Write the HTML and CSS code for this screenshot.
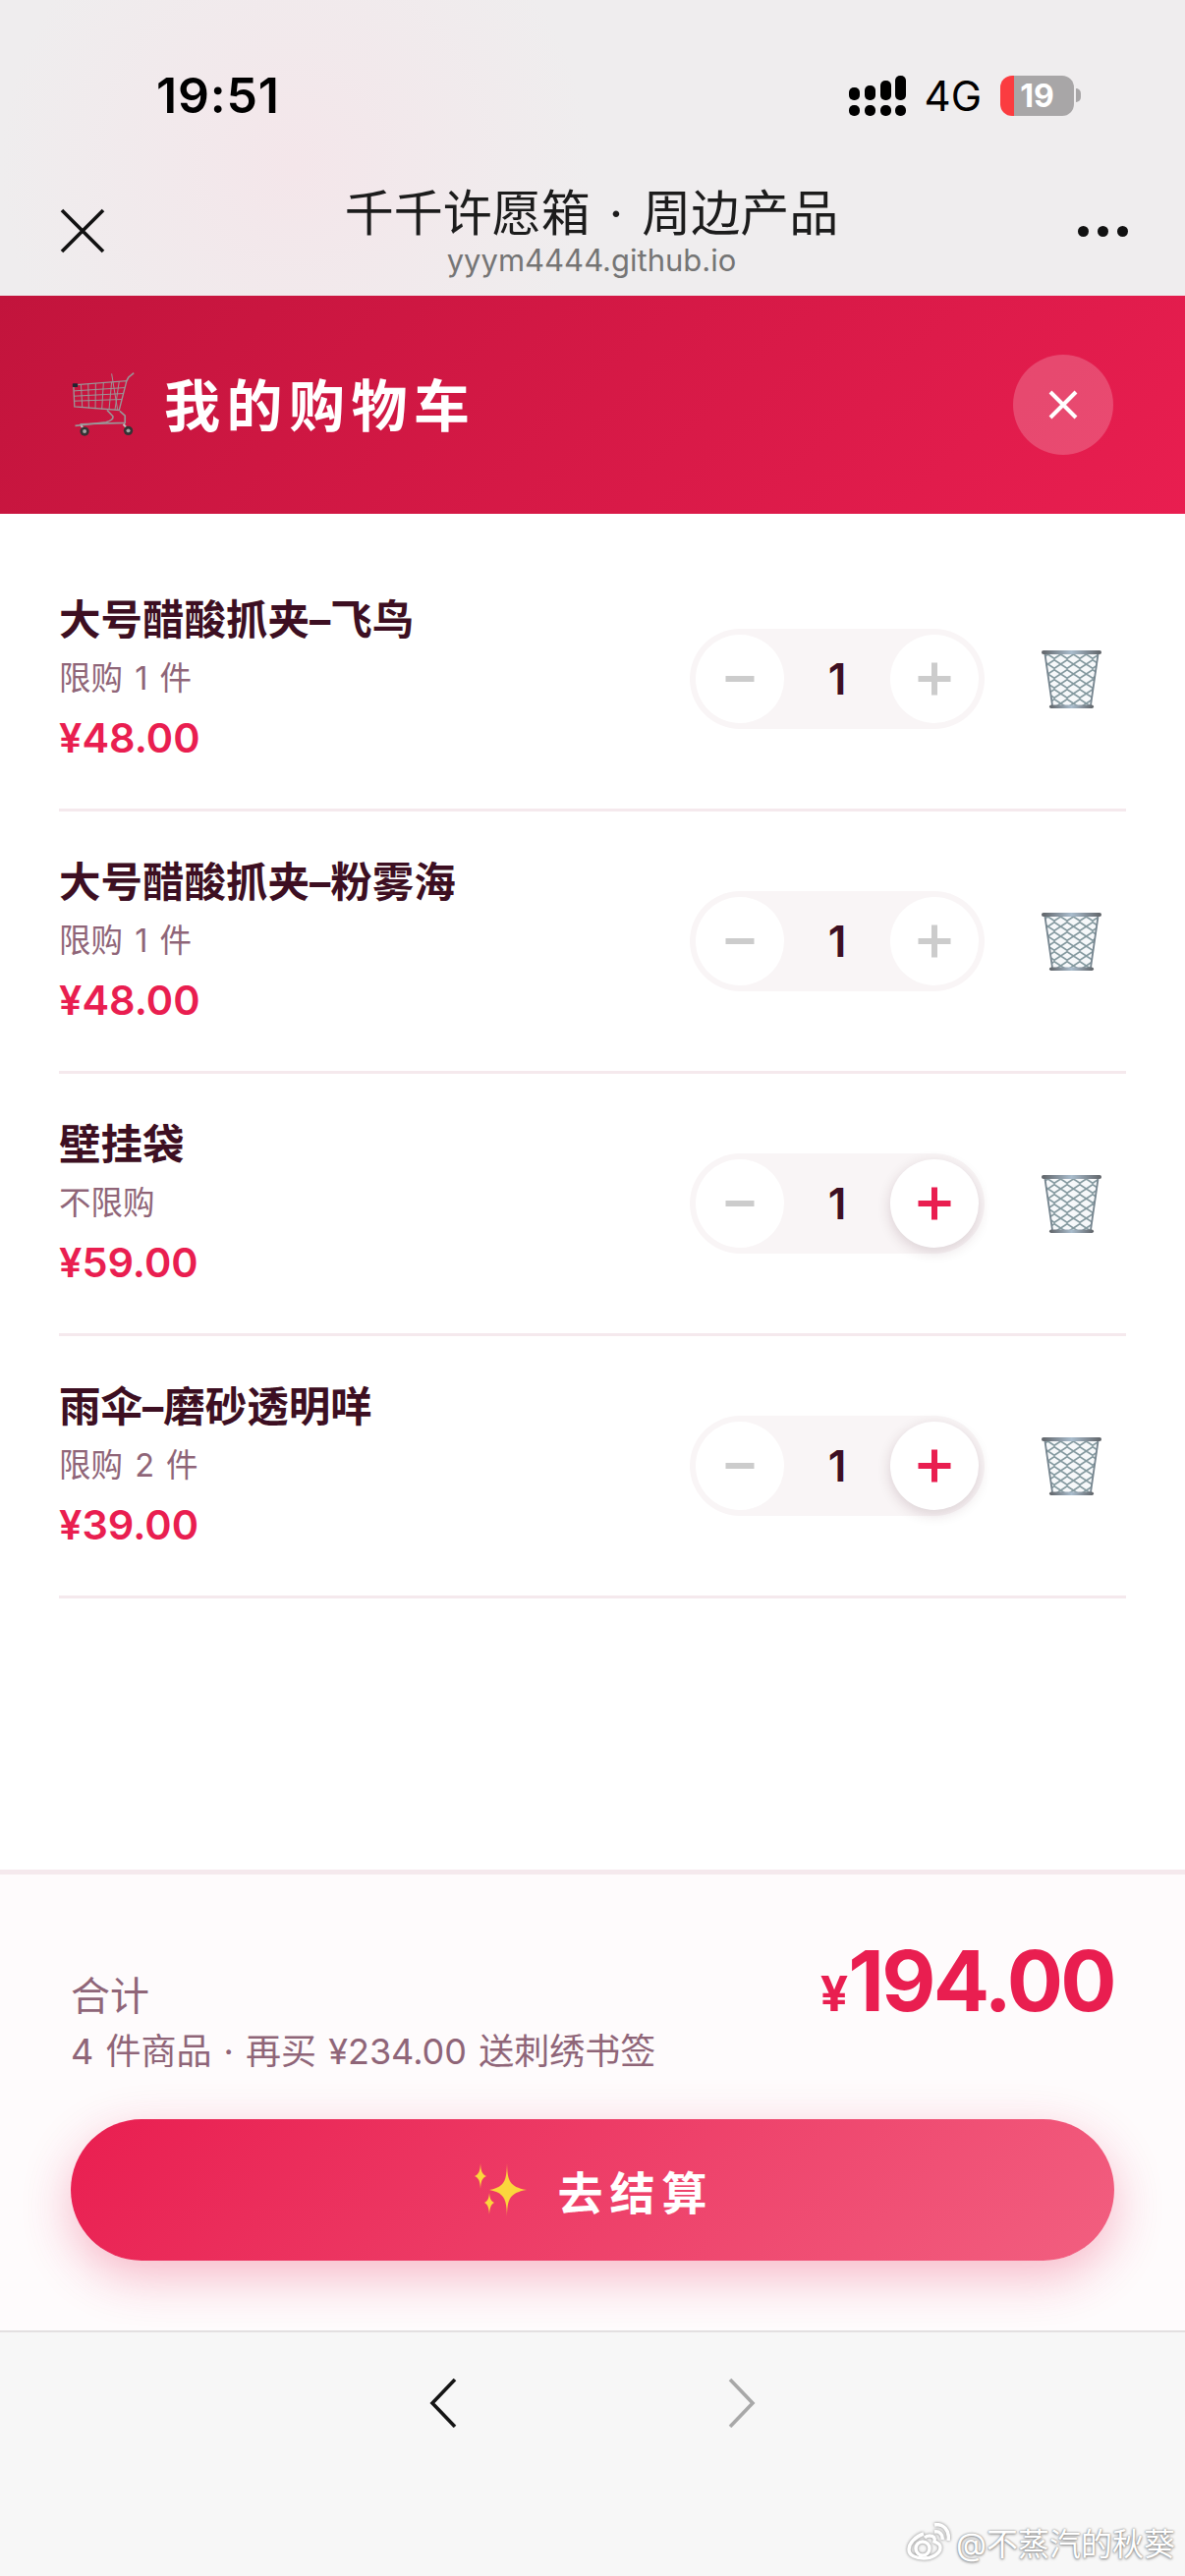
FILE: index.html
```html
<!DOCTYPE html>
<html lang="zh-CN">
<head>
    <meta charset="UTF-8">
    <meta name="viewport" content="width=device-width, initial-scale=1.0">
    <title>我的购物车</title>
    <link rel="stylesheet" href="styles.css">
</head>
<body>
    <svg class="defs" width="0" height="0">
        <defs>
            <pattern id="mesh" width="13" height="10" patternUnits="userSpaceOnUse">
                <path d="M-1 0 L14 10 M14 0 L-1 10" stroke="#84999f" stroke-width="1.600" fill="none"/>
            </pattern>
            <linearGradient id="rim" x1="0" y1="0" x2="1" y2="0">
                <stop offset="0" stop-color="#5f6368"/>
                <stop offset=".5" stop-color="#a9bccc"/>
                <stop offset="1" stop-color="#5f6368"/>
            </linearGradient>
            <symbol id="trash" viewBox="0 0 61 61">
                <path d="M3 5 H58 L50 57 H11 Z" fill="#f6f8fa"/>
                <path d="M3 5 H58 L50 57 H11 Z" fill="url(#mesh)"/>
                <path d="M3.500 5 L11 57 M57.500 5 L50 57" stroke="#76858f" stroke-width="1.800" fill="none"/>
                <rect x="0" y="1" width="61" height="4" rx="2" fill="url(#rim)"/>
                <rect x="8" y="56.500" width="45" height="3.500" rx="1.700" fill="url(#rim)"/>
            </symbol>
        </defs>
    </svg>

    <div class="app">
        <div class="topbar">
            <div class="status">
                <span class="time">19:51</span>
                <div class="status-right">
                    <svg class="signal" width="58" height="41" viewBox="0 0 58 41">
                        <rect x="0" y="12" width="11" height="13" rx="5"/>
                        <rect x="16" y="10" width="11" height="15" rx="5"/>
                        <rect x="32" y="5" width="11" height="20" rx="5"/>
                        <rect x="47" y="0" width="11" height="25" rx="5"/>
                        <rect x="0" y="30" width="11" height="11" rx="5"/>
                        <rect x="16" y="30" width="11" height="11" rx="5"/>
                        <rect x="32" y="30" width="11" height="11" rx="5"/>
                        <rect x="47" y="30" width="11" height="11" rx="5"/>
                    </svg>
                    <span class="net">4G</span>
                    <div class="battery"><span class="battery-num">19</span></div>
                    <span class="battery-tip"></span>
                </div>
            </div>
            <div class="nav">
                <svg class="nav-close" width="46" height="46" viewBox="0 0 46 46">
                    <path d="M2 2 L44 44 M44 2 L2 44" stroke="#111" stroke-width="3.600" fill="none"/>
                </svg>
                <div class="nav-title">
                    <div class="site-name">千千许愿箱 · 周边产品</div>
                    <div class="site-url">yyym4444.github.io</div>
                </div>
                <div class="nav-more"><i></i><i></i><i></i></div>
            </div>
        </div>

        <div class="cart-head">
            <svg class="cart-icon" width="65" height="68" viewBox="100 90 195 205">
                <g fill="none" stroke="#9a9698" stroke-width="3">
                    <path d="M105 132 L268 119 L245 209 L108 198 Z" stroke-width="4"/>
                    <path d="M106 150 L262 140 M107 166 L258 158 M108 181 L253 176"/>
                    <path d="M128 131 L132 201 M150 129 L152 203 M173 127 L172 205 M197 125 L192 206 M222 123 L214 208 M245 121 L232 209"/>
                    <path d="M222 97 L240 207" stroke-width="3"/>
                    <path d="M268 119 L274 108 L290 95" stroke-width="5"/>
                    <path d="M208 209 L226 228 C228 238 218 242 205 246 L110 257" stroke-width="5"/>
                    <path d="M247 212 L263 226 L263 248 L125 252" stroke-width="5"/>
                    <path d="M128 256 L138 268 M258 252 L270 266" stroke="#c2c0c0" stroke-width="6"/>
                </g>
                <rect x="102" y="127" width="16" height="11" rx="2" fill="#1f2430"/>
                <circle cx="139" cy="274" r="14" fill="#343334"/>
                <circle cx="139" cy="274" r="6" fill="#a5a3a3"/>
                <circle cx="273" cy="272" r="14" fill="#343334"/>
                <circle cx="273" cy="272" r="6" fill="#a5a3a3"/>
            </svg>
            <h1 class="cart-title">我的购物车</h1>
            <button class="head-close">
                <svg width="30" height="30" viewBox="0 0 30 30">
                    <path d="M2 2 L28 28 M28 2 L2 28" stroke="#fff" stroke-width="4" fill="none"/>
                </svg>
            </button>
        </div>

        <main class="cart-list">
            <div class="cart-item">
                <div class="item-info">
                    <div class="item-name">大号醋酸抓夹–飞鸟</div>
                    <div class="item-limit">限购 1 件</div>
                    <div class="item-price">¥48.00</div>
                </div>
                <div class="stepper">
                    <span class="step minus"></span>
                    <span class="qty">1</span>
                    <span class="step plus"></span>
                </div>
                <svg class="trash" width="61" height="61"><use href="#trash"/></svg>
            </div>
            <div class="cart-item">
                <div class="item-info">
                    <div class="item-name">大号醋酸抓夹–粉雾海</div>
                    <div class="item-limit">限购 1 件</div>
                    <div class="item-price">¥48.00</div>
                </div>
                <div class="stepper">
                    <span class="step minus"></span>
                    <span class="qty">1</span>
                    <span class="step plus"></span>
                </div>
                <svg class="trash" width="61" height="61"><use href="#trash"/></svg>
            </div>
            <div class="cart-item">
                <div class="item-info">
                    <div class="item-name">壁挂袋</div>
                    <div class="item-limit">不限购</div>
                    <div class="item-price">¥59.00</div>
                </div>
                <div class="stepper">
                    <span class="step minus"></span>
                    <span class="qty">1</span>
                    <span class="step plus active"></span>
                </div>
                <svg class="trash" width="61" height="61"><use href="#trash"/></svg>
            </div>
            <div class="cart-item">
                <div class="item-info">
                    <div class="item-name">雨伞–磨砂透明咩</div>
                    <div class="item-limit">限购 2 件</div>
                    <div class="item-price">¥39.00</div>
                </div>
                <div class="stepper">
                    <span class="step minus"></span>
                    <span class="qty">1</span>
                    <span class="step plus active"></span>
                </div>
                <svg class="trash" width="61" height="61"><use href="#trash"/></svg>
            </div>
        </main>

        <footer class="cart-foot">
            <div class="summary">
                <div class="summary-left">
                    <div class="summary-label">合计</div>
                    <div class="summary-note">4 件商品 · 再买 ¥234.00 送刺绣书签</div>
                </div>
                <div class="summary-total"><span class="yen">¥</span>194.00</div>
            </div>
            <button class="checkout">
                <svg class="sparkles" width="56" height="54" viewBox="0 0 56 54">
                    <path d="M36 0 C36.500 17 38 24 56 27 C38 30 36.500 37 36 54 C35.500 37 34 30 18 27 C34 24 35.500 17 36 0 Z" fill="#fbd63c"/>
                    <path d="M9 0 C9.500 8 10.500 11 15 13 C10.500 15 9.500 18 9 26 C8.500 18 7.500 15 3 13 C7.500 11 8.500 8 9 0 Z" fill="#fbd63c"/>
                    <path d="M18 30 C18.500 36 19.500 38 23 40 C19.500 42 18.500 45 18 52 C17.500 45 16.500 42 13 40 C16.500 38 17.500 36 18 30 Z" fill="#fbd63c"/>
                </svg>
                <span class="checkout-text">去结算</span>
            </button>
        </footer>

        <div class="browser-bar">
            <svg width="28" height="50" viewBox="0 0 28 50">
                <path d="M26 1 L3 25 L26 49" stroke="#151515" stroke-width="3.600" fill="none"/>
            </svg>
            <svg width="28" height="50" viewBox="0 0 28 50">
                <path d="M2 1 L25 25 L2 49" stroke="#a8a8a8" stroke-width="3.600" fill="none"/>
            </svg>
        </div>

        <div class="watermark">
            <svg width="44" height="38" viewBox="0 0 44 38">
                <g fill="none" stroke="#fff" stroke-width="3.500">
                    <path d="M17 11 C8 14 2 21 2 27 C2 33 9 36 17 36 C26 36 34 31 34 25 C34 21 30 20 28 19 C29 15 27 13 23 13 C21 13 19 14 18 15"/>
                    <circle cx="16" cy="26" r="7"/>
                    <path d="M28 9 C33 8 37 12 36 17 M28 2 C37 0 44 8 42 18"/>
                </g>
            </svg>
            <span>@不蒸汽的秋葵</span>
        </div>
    </div>
</body>
</html>
```

FILE: styles.css
```css
* {
    box-sizing: border-box;
}
body {
    margin: 0;
    font-family: Inter, "Noto Sans CJK SC", sans-serif;
    background-color: #fff;
}
.defs {
    position: absolute;
}
.app {
    position: relative;
    display: flex;
    flex-direction: column;
    height: 2622px;
    overflow: hidden;
}

/* phone status bar and webview title */
.topbar {
    height: 301px;
    padding-top: 72px;
    background: radial-gradient(ellipse 300px 300px at 300px 170px, #f4e6ea, #efedee);
}
.status {
    display: flex;
    align-items: center;
    justify-content: space-between;
    height: 50px;
    padding: 0 106px 0 159px;
}
.time {
    font-size: 50px;
    font-weight: 600;
    letter-spacing: 0.8px;
    color: #000;
}
.status-right {
    display: flex;
    align-items: center;
}
.signal {
    margin-right: 19px;
}
.net {
    font-size: 42px;
    color: #000;
    margin-right: 19px;
}
.battery {
    width: 75px;
    height: 41px;
    border-radius: 12px;
    background: linear-gradient(90deg, #fb3c40 14px, #a8a6a7 14px);
    text-align: center;
}
.battery-num {
    font-size: 32px;
    font-weight: 700;
    line-height: 41px;
    color: #fff;
}
.battery-tip {
    width: 5px;
    height: 14px;
    margin-left: 2px;
    border-radius: 0 7px 7px 0;
    background-color: #a8a6a7;
}
.nav {
    display: flex;
    align-items: center;
    justify-content: space-between;
    margin-top: 65px;
    padding: 0 58px 0 61px;
}
.nav-title {
    text-align: center;
}
.site-name {
    font-size: 50px;
    line-height: 60px;
    word-spacing: 5px;
    color: #1c1c1c;
}
.site-url {
    font-size: 31px;
    line-height: 36px;
    color: #757575;
}
.nav-more {
    display: flex;
    gap: 9px;
}
.nav-more i {
    width: 11px;
    height: 11px;
    border-radius: 50%;
    background-color: #111;
}

/* red cart header */
.cart-head {
    display: flex;
    align-items: center;
    height: 222px;
    padding: 0 73px 0 73px;
    background: linear-gradient(135deg, #c2143c, #e91e50);
}
.cart-icon {
    flex: none;
    margin-right: 29px;
}
.cart-title {
    flex: 1;
    margin: 0 0 6px;
    font-size: 57px;
    font-weight: 700;
    letter-spacing: 6.500px;
    color: #fff;
}
.head-close {
    display: flex;
    align-items: center;
    justify-content: center;
    width: 102px;
    height: 102px;
    padding: 0;
    border: none;
    border-radius: 50%;
    background-color: rgba(255, 255, 255, 0.2);
}

/* cart rows */
.cart-list {
    flex: 1;
    padding: 36px 60px 0;
}
.cart-item {
    display: flex;
    align-items: center;
    height: 267px;
    padding-right: 25px;
    border-bottom: 3px solid #f5e9ed;
}
.item-info {
    flex: 1;
}
.item-name {
    font-size: 42.500px;
    font-weight: 700;
    line-height: 60px;
    color: #3d0f22;
}
.item-limit {
    font-size: 32.500px;
    line-height: 60px;
    word-spacing: 3px;
    color: #8f6578;
}
.item-price {
    font-size: 41.500px;
    font-weight: 600;
    line-height: 60px;
    color: #e91e50;
}
.stepper {
    display: flex;
    align-items: center;
    justify-content: space-between;
    width: 300px;
    height: 102px;
    padding: 0 6px;
    margin-right: 58px;
    border-radius: 51px;
    background-color: #f9f5f6;
}
.qty {
    font-size: 44px;
    font-weight: 600;
    color: #3d0f22;
}
.step {
    position: relative;
    width: 90px;
    height: 90px;
    border-radius: 50%;
    background-color: #fff;
}
.step::before,
.plus::after {
    content: "";
    position: absolute;
    left: 50%;
    top: 50%;
    background-color: #cccccc;
    transform: translate(-50%, -50%);
}
.minus::before {
    width: 29px;
    height: 6px;
}
.plus::before {
    width: 33px;
    height: 6px;
}
.plus::after {
    width: 6px;
    height: 33px;
}
.plus.active {
    box-shadow: 0 4px 14px rgba(61, 15, 34, 0.16);
}
.plus.active::before,
.plus.active::after {
    background-color: #e91e50;
}
.trash {
    flex: none;
}

/* totals */
.cart-foot {
    height: 469px;
    padding: 59px 72px 0;
    border-top: 5px solid #f5e9ed;
    background-color: #fefbfc;
}
.summary {
    display: flex;
    justify-content: space-between;
    height: 149px;
    margin-bottom: 41px;
}
.summary-left {
    padding-top: 37px;
}
.summary-label {
    font-size: 40px;
    line-height: 56px;
    color: #8f6578;
}
.summary-note {
    font-size: 36px;
    line-height: 56px;
    word-spacing: 2px;
    color: #8f6578;
}
.summary-total {
    font-size: 85px;
    font-weight: 700;
    line-height: 100px;
    letter-spacing: -2.700px;
    color: #e91e50;
}
.yen {
    font-size: 50px;
    letter-spacing: 0;
}
.checkout {
    display: flex;
    align-items: center;
    justify-content: center;
    width: 100%;
    height: 144px;
    padding: 0;
    border: none;
    border-radius: 72px;
    background: linear-gradient(135deg, #e91e50, #f25f80);
    box-shadow: 0 16px 50px rgba(233, 30, 80, 0.3);
}
.sparkles {
    margin-right: 32px;
}
.checkout-text {
    font-family: Inter, "Noto Sans CJK SC", sans-serif;
    font-size: 46px;
    font-weight: 700;
    letter-spacing: 7px;
    color: #fff;
}

/* browser toolbar */
.browser-bar {
    position: relative;
    flex: none;
    display: flex;
    justify-content: center;
    gap: 276px;
    height: 250px;
    padding-top: 47px;
    border-top: 2px solid #e3e0e1;
    background-color: #f7f7f7;
}
.watermark {
    position: absolute;
    right: 10px;
    bottom: 12px;
    display: flex;
    align-items: center;
    gap: 6px;
    font-size: 32px;
    color: #fff;
    text-shadow: 0 0 2px #7a7a7a, 0 1px 3px #8a8a8a;
}
.watermark svg {
    filter: drop-shadow(0 0 1.500px #7a7a7a);
}
```
